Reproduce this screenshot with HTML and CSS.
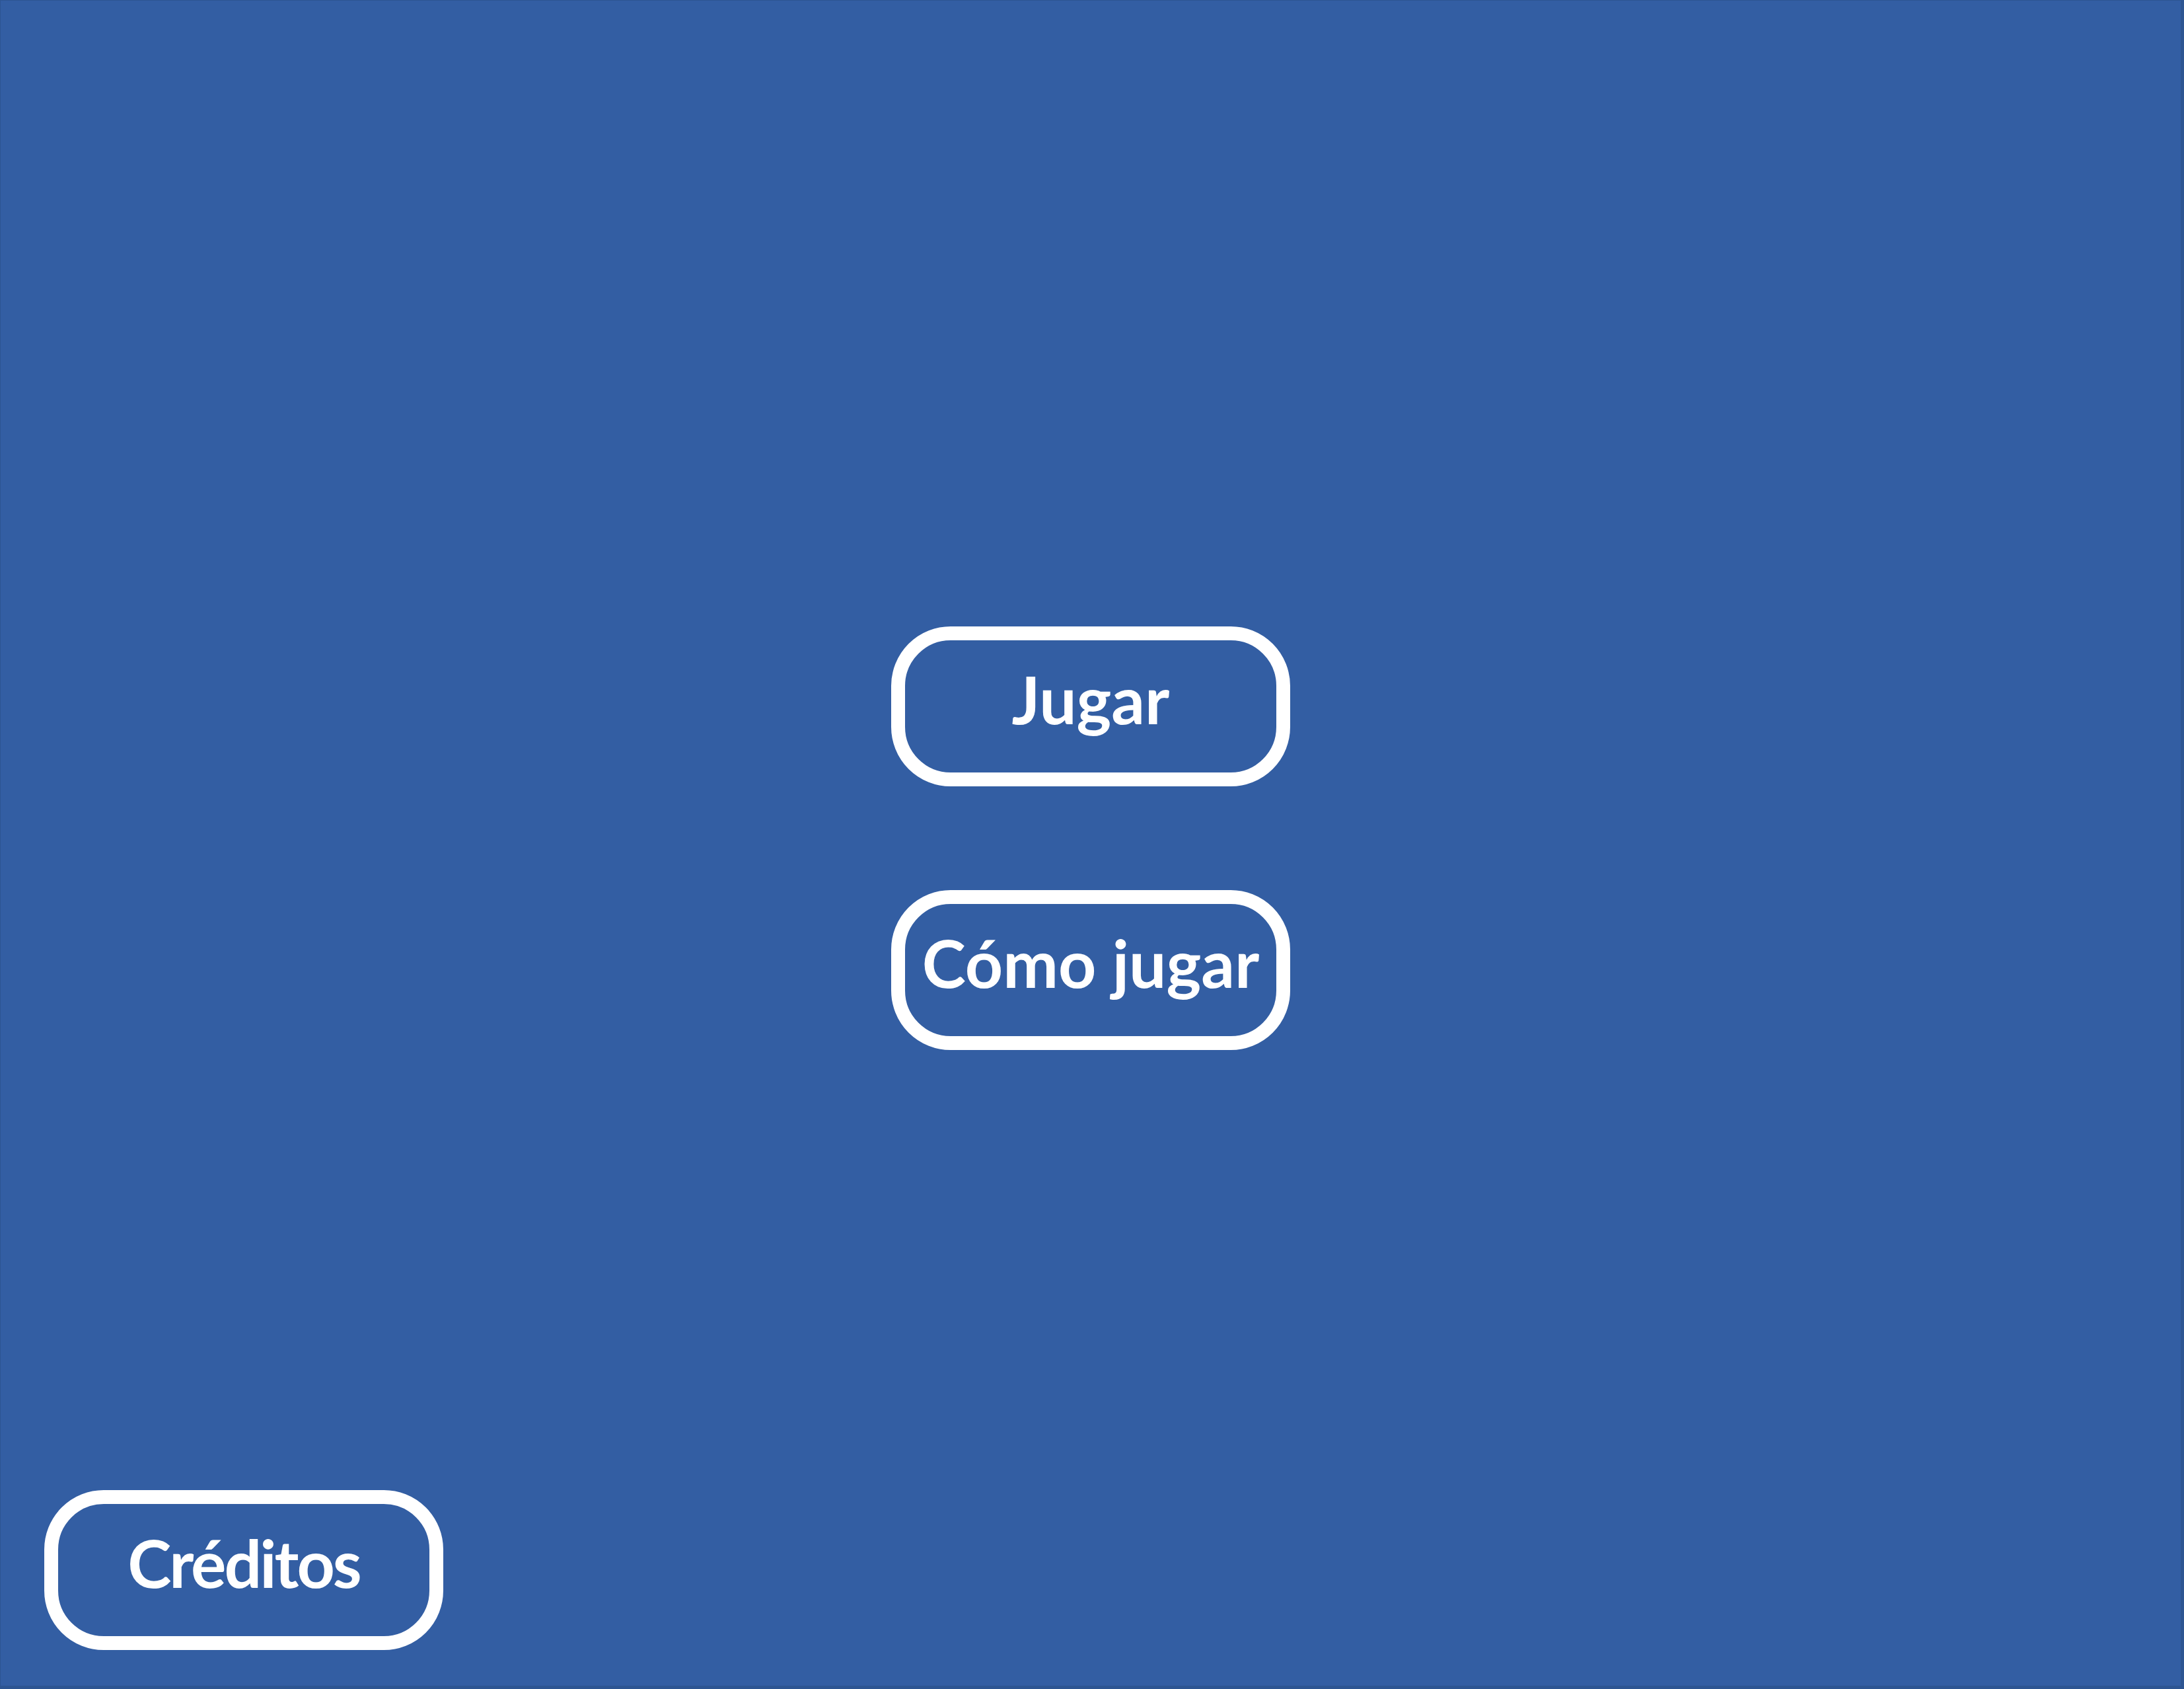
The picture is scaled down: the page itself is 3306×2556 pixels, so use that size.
FILE: index.html
```html
<!DOCTYPE html>
<html lang="es">
<head>
<meta charset="utf-8">
<title>Menú</title>
<link rel="stylesheet" href="styles.css">
</head>
<body>
<main class="screen">
  <nav class="menu">
    <button class="btn">Jugar</button>
    <button class="btn">Cómo jugar</button>
  </nav>
  <footer class="footer">
    <button class="btn btn-tight">Créditos</button>
  </footer>
</main>
</body>
</html>
```

FILE: styles.css
```css
html, body {
  margin: 0;
  padding: 0;
  background: #2d5592;
}

.screen {
  box-sizing: border-box;
  width: 3300px;
  height: 2550px;
  margin: 1px 5px 5px 1px;
  background: #335ea3;
  display: flex;
  flex-direction: column;
}

.menu {
  display: flex;
  flex-direction: column;
  align-items: center;
  gap: 157px;
  padding-top: 947px;
}

.footer {
  margin-top: auto;
  padding: 0 0 54px 66px;
}

.btn {
  box-sizing: border-box;
  width: 604px;
  height: 242px;
  border: 21px solid #ffffff;
  border-radius: 90px;
  background: transparent;
  color: #ffffff;
  font-family: Lato, "Open Sans", sans-serif;
  font-size: 100px;
  font-weight: 700;
  line-height: 1;
  padding: 0 0 24px 0;
  display: flex;
  align-items: center;
  justify-content: center;
  cursor: pointer;
}

.btn-tight {
  letter-spacing: -3px;
}
```
